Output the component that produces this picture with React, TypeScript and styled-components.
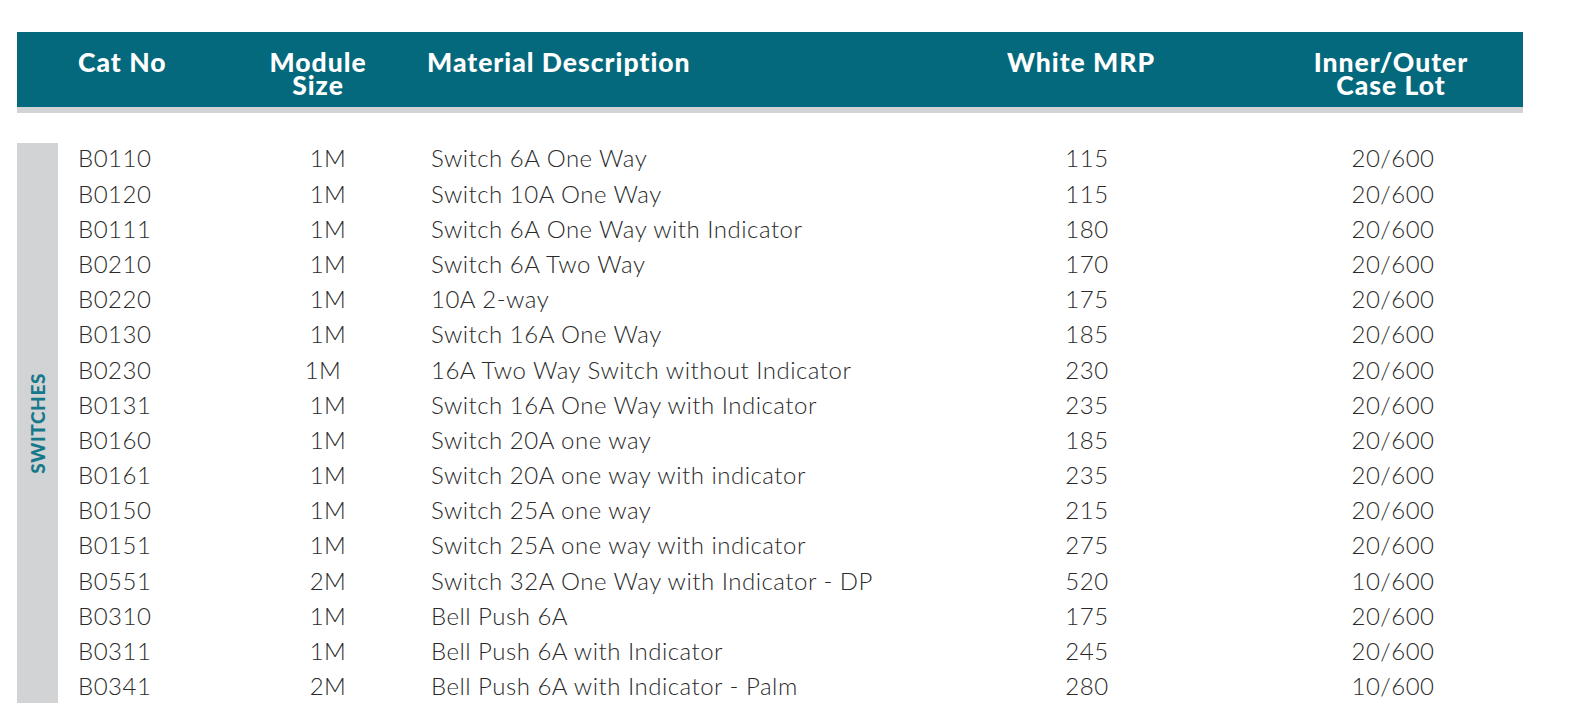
import React from "react";
import styled, { createGlobalStyle } from "styled-components";

const GlobalStyle = createGlobalStyle`
  html, body { margin: 0; padding: 0; background: #ffffff; }
  body { font-family: "Lato", "Liberation Sans", sans-serif; }
`;

const TEAL = "#05697d";
const GRAY = "#d1d3d4";
const COLS = "190px 120px 612px 174px 349px";

const Page = styled.div`
  width: 1506px;
  padding: 32px 0 0 17px;
`;

const HeaderBar = styled.div`
  display: grid;
  grid-template-columns: ${COLS};
  height: 75px;
  padding-left: 61px;
  background: ${TEAL};
  border-bottom: 6px solid ${GRAY};
  box-sizing: content-box;
  width: 1445px;
`;

const HeadCell = styled.div<{ $align?: string; $pl?: number; $pr?: number }>`
  padding-top: 19px;
  padding-left: ${(p) => p.$pl ?? 0}px;
  padding-right: ${(p) => p.$pr ?? 0}px;
  text-align: ${(p) => p.$align ?? "left"};
  color: #ffffff;
  font-weight: 900;
  font-size: 26.5px;
  letter-spacing: 1px;
  white-space: nowrap;
`;

const HeadLine = styled.div`
  height: 23px;
  line-height: 23px;
`;

const Body = styled.div`
  display: flex;
  align-items: flex-start;
  margin-top: 30px;
`;

const SideLabel = styled.div`
  width: 41px;
  height: 560px;
  background: ${GRAY};
  display: flex;
  align-items: center;
  justify-content: center;
  flex-shrink: 0;
`;

const SideText = styled.span`
  writing-mode: vertical-rl;
  transform: rotate(180deg);
  color: #16788b;
  font-weight: 900;
  font-size: 19px;
  letter-spacing: 0.6px;
`;

const Rows = styled.div`
  margin-top: -2.6px;
  padding-left: 20px;
`;

const Row = styled.div`
  display: grid;
  grid-template-columns: ${COLS};
  height: 35.2px;
  align-items: center;
  color: #2a2a2a;
  font-size: 24px;
  font-weight: 300;
  letter-spacing: 0.5px;
  line-height: 35.2px;
  white-space: nowrap;
`;

const Cell = styled.div<{ $align?: string; $pl?: number; $pr?: number }>`
  text-align: ${(p) => p.$align ?? "left"};
  padding-left: ${(p) => p.$pl ?? 0}px;
  padding-right: ${(p) => p.$pr ?? 0}px;
`;

const data: [string, string, string, string, string][] = [
  ["B0110", "1M", "Switch 6A One Way", "115", "20/600"],
  ["B0120", "1M", "Switch 10A One Way", "115", "20/600"],
  ["B0111", "1M", "Switch 6A One Way with Indicator", "180", "20/600"],
  ["B0210", "1M", "Switch 6A Two Way", "170", "20/600"],
  ["B0220", "1M", "10A 2-way", "175", "20/600"],
  ["B0130", "1M", "Switch 16A One Way", "185", "20/600"],
  ["B0230", "1M", "16A Two Way Switch without Indicator", "230", "20/600"],
  ["B0131", "1M", "Switch 16A One Way with Indicator", "235", "20/600"],
  ["B0160", "1M", "Switch 20A one way", "185", "20/600"],
  ["B0161", "1M", "Switch 20A one way with indicator", "235", "20/600"],
  ["B0150", "1M", "Switch 25A one way", "215", "20/600"],
  ["B0151", "1M", "Switch 25A one way with indicator", "275", "20/600"],
  ["B0551", "2M", "Switch 32A One Way with Indicator - DP", "520", "10/600"],
  ["B0310", "1M", "Bell Push 6A", "175", "20/600"],
  ["B0311", "1M", "Bell Push 6A with Indicator", "245", "20/600"],
  ["B0341", "2M", "Bell Push 6A with Indicator - Palm", "280", "10/600"],
];

export default function App() {
  return (
    <>
      <GlobalStyle />
      <Page>
        <HeaderBar>
          <HeadCell>
            <HeadLine>Cat No</HeadLine>
          </HeadCell>
          <HeadCell $align="center" $pr={20}>
            <HeadLine>Module</HeadLine>
            <HeadLine>Size</HeadLine>
          </HeadCell>
          <HeadCell $pl={39}>
            <HeadLine>Material Description</HeadLine>
          </HeadCell>
          <HeadCell $align="center" $pr={12}>
            <HeadLine>White MRP</HeadLine>
          </HeadCell>
          <HeadCell $align="center" $pl={85}>
            <HeadLine>Inner/Outer</HeadLine>
            <HeadLine>Case Lot</HeadLine>
          </HeadCell>
        </HeaderBar>
        <Body>
          <SideLabel>
            <SideText>SWITCHES</SideText>
          </SideLabel>
          <Rows>
            {data.map((r) => (
              <Row key={r[0]}>
                <Cell>{r[0]}</Cell>
                <Cell $align="center" $pr={r[0] === "B0230" ? 10 : 0}>
                  {r[1]}
                </Cell>
                <Cell $pl={43}>{r[2]}</Cell>
                <Cell $align="center">{r[3]}</Cell>
                <Cell $align="center" $pl={89}>
                  {r[4]}
                </Cell>
              </Row>
            ))}
          </Rows>
        </Body>
      </Page>
    </>
  );
}
